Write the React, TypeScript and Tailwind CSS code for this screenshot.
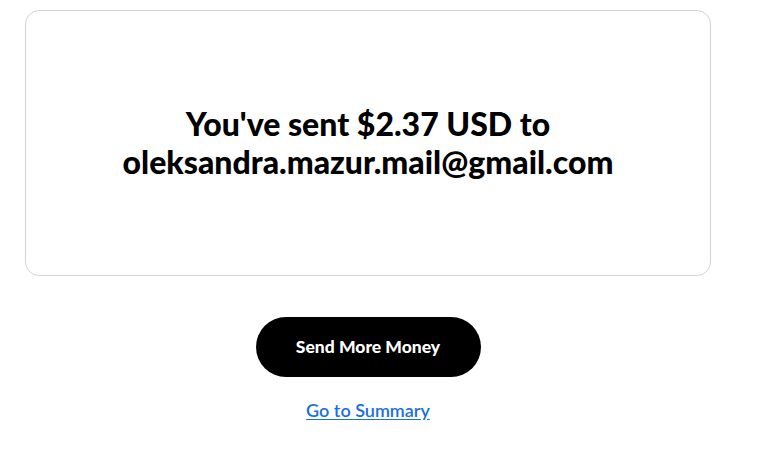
import React from "react";

const App: React.FC = () => {
  return (
    <div className="min-h-[455px] w-full bg-white pt-[10px] font-['Lato',sans-serif]">
      <div className="ml-[25px] w-[686px]">
        <div className="flex h-[266px] items-center justify-center rounded-[14px] border border-[#d4d4d4] px-6">
          <h2 className="text-center text-[32px] font-black leading-[38px] text-black">
            You've sent $2.37 USD to
            <br />
            oleksandra.mazur.mail@gmail.com
          </h2>
        </div>
        <div className="mt-[41px] flex flex-col items-center">
          <button className="h-[60px] w-[225px] rounded-full bg-black text-[17.5px] font-black text-white">
            Send More Money
          </button>
          <a
            href="#"
            className="mt-[20px] text-[18px] font-semibold text-[#1a6fe0] underline underline-offset-2"
          >
            Go to Summary
          </a>
        </div>
      </div>
    </div>
  );
};

export default App;
